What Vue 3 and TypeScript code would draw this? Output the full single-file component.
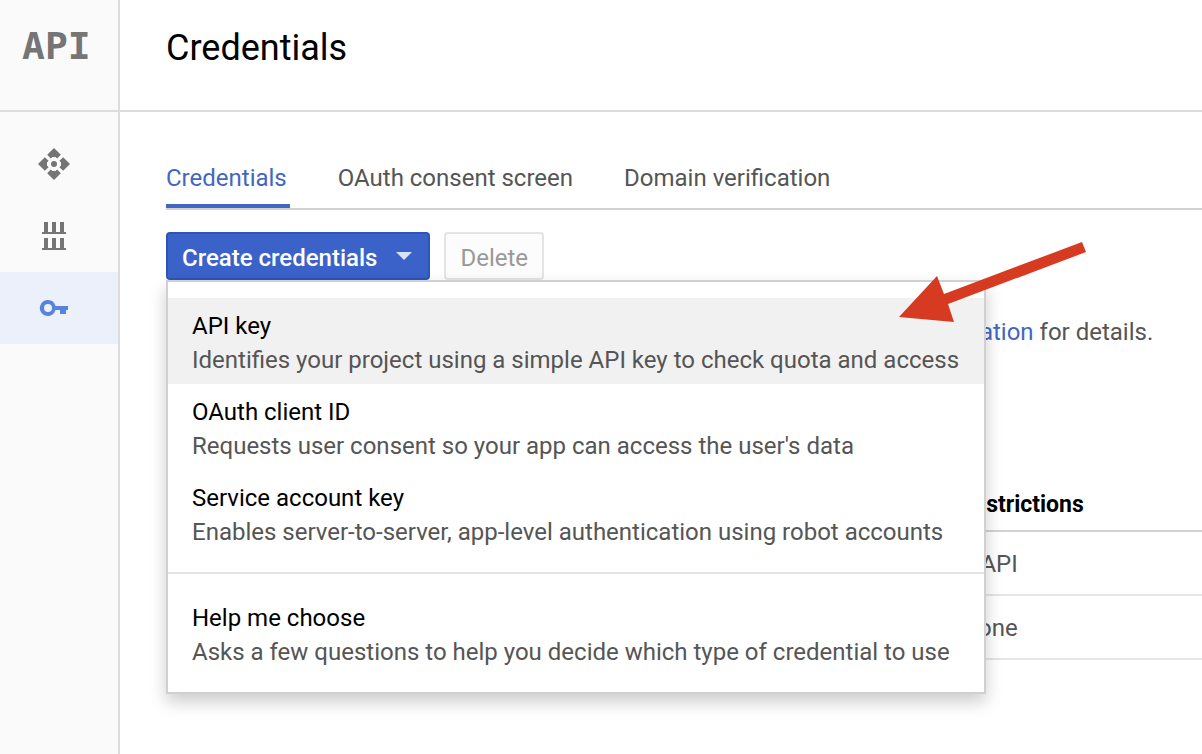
<script setup lang="ts">
interface Choice {
  title: string
  text: string
}

const tabs: string[] = ['Credentials', 'OAuth consent screen', 'Domain verification']

const choices: Choice[] = [
  { title: 'API key', text: 'Identifies your project using a simple API key to check quota and access' },
  { title: 'OAuth client ID', text: "Requests user consent so your app can access the user's data" },
  { title: 'Service account key', text: 'Enables server-to-server, app-level authentication using robot accounts' },
]

const help: Choice = {
  title: 'Help me choose',
  text: 'Asks a few questions to help you decide which type of credential to use',
}

const restrictions: string[] = ['1 API', 'None']
</script>

<template>
  <div class="shell">
    <aside class="sidebar">
      <div class="brand">API</div>
      <nav class="side-nav">
        <a href="#" class="side-link" aria-label="Dashboard">
          <svg width="32" height="32" viewBox="0 0 32 32" fill="currentColor">
            <path d="M16 0l6.800 6.800-3.600 3.800-1.600-1.600h-3.200l-1.600 1.600-3.600-3.800z" />
            <path d="M32 16l-6.800 6.800-3.800-3.600 1.600-1.600v-3.200l-1.600-1.600 3.800-3.600z" />
            <path d="M16 32l-6.800-6.800 3.600-3.800 1.600 1.600h3.200l1.600-1.600 3.600 3.800z" />
            <path d="M0 16l6.800-6.800 3.800 3.600-1.600 1.600v3.200l1.600 1.600-3.800 3.600z" />
            <circle cx="16" cy="16" r="3" />
          </svg>
        </a>
        <a href="#" class="side-link" aria-label="Library">
          <svg width="32" height="32" viewBox="0 0 32 32" fill="currentColor">
            <path d="M6 2h4v10h4V2h4v10h4V2h4v10h2v2H4v-2h2z" />
            <path d="M6 18h4v10h4V18h4v10h4V18h4v10h2v2H4v-2h2z" />
          </svg>
        </a>
        <a href="#" class="side-link active" aria-label="Credentials">
          <svg width="32" height="32" viewBox="0 0 32 32" fill="currentColor">
            <path
              fill-rule="evenodd"
              d="M10 8a8 8 0 0 1 7.500 6H30v4h-2v4h-6v-4h-4.500A8 8 0 1 1 10 8zm0 4a4 4 0 1 0 0 8 4 4 0 0 0 0-8z"
            />
          </svg>
        </a>
      </nav>
    </aside>

    <main class="main">
      <header class="header">
        <h1>Credentials</h1>
      </header>

      <div class="content">
        <nav class="tabs">
          <a v-for="(tab, i) in tabs" :key="tab" href="#" class="tab" :class="{ current: i === 0 }">{{ tab }}</a>
        </nav>

        <div class="actions">
          <div class="picker">
            <button type="button" class="create" aria-haspopup="menu" aria-expanded="true">
              <span class="label">Create credentials</span>
              <svg width="16" height="8" viewBox="0 0 16 8"><path d="M0 0h16l-8 8z" fill="#d7e3fb" /></svg>
            </button>
            <div class="menu" role="menu">
              <button
                v-for="(choice, i) in choices"
                :key="choice.title"
                type="button"
                role="menuitem"
                class="choice"
                :class="{ hovered: i === 0 }"
              >
                <span class="choice-title">{{ choice.title }}</span>
                <span class="choice-text">{{ choice.text }}</span>
              </button>
              <hr />
              <button type="button" role="menuitem" class="choice">
                <span class="choice-title">{{ help.title }}</span>
                <span class="choice-text">{{ help.text }}</span>
              </button>
              <svg class="pointer" width="188" height="84" viewBox="0 0 188 84">
                <path d="M0 77L38 36l7 18L183 2l4 10L49 64l6 18z" fill="#d63a20" />
              </svg>
            </div>
          </div>
          <button type="button" class="delete" disabled><span class="label">Delete</span></button>
        </div>

        <p class="intro"><a href="#">documentation</a> for details.</p>

        <table class="keys">
          <thead>
            <tr>
              <td class="lead"></td>
              <th scope="col">Restrictions</th>
            </tr>
          </thead>
          <tbody>
            <tr v-for="item in restrictions" :key="item">
              <td class="lead"></td>
              <td>{{ item }}</td>
            </tr>
          </tbody>
        </table>
      </div>
    </main>
  </div>
</template>

<style>
body {
  margin: 0;
  background: #fff;
}
</style>

<style scoped>
.shell {
  display: flex;
  min-height: 100vh;
  overflow: hidden;
  font-family: Roboto, "Liberation Sans", sans-serif;
  font-size: 24px;
  line-height: 34px;
  color: #555;
}

.shell *,
.shell {
  box-sizing: border-box;
}

a {
  color: #4267c1;
  text-decoration: none;
}

button {
  font: inherit;
  margin: 0;
}

svg {
  display: block;
}

.sidebar {
  flex: none;
  width: 120px;
  background: #fafafa;
  border-right: 2px solid #dcdcdc;
}

.brand {
  height: 112px;
  padding: 23px 0 0 22px;
  border-bottom: 2px solid #dcdcdc;
  font-family: "DejaVu Sans Mono", monospace;
  font-size: 38px;
  font-weight: 700;
  line-height: 46px;
  color: #757575;
}

.side-nav {
  padding-top: 16px;
}

.side-link {
  display: flex;
  align-items: center;
  height: 72px;
  padding-left: 38px;
  color: #757575;
}

.side-link.active {
  background: #ebf0fa;
  color: #5683df;
}

.main {
  flex: 1;
  min-width: 0;
}

.header {
  height: 112px;
  padding: 24px 46px;
  border-bottom: 2px solid #dcdcdc;
}

h1 {
  margin: 0;
  font-size: 36px;
  font-weight: 400;
  line-height: 48px;
  color: #000;
}

.content {
  padding: 48px 0 0 46px;
}

.tabs {
  display: flex;
  gap: 48px;
  height: 50px;
  border-bottom: 2px solid #d2d2d2;
}

.tab {
  height: 48px;
  padding: 1px 3px 0 0;
  color: #555;
}

.tab.current {
  color: #4267c1;
  border-bottom: 4px solid #4267c1;
}

.actions {
  display: flex;
  gap: 14px;
  padding-top: 22px;
}

.picker {
  position: relative;
}

.create,
.delete {
  display: flex;
  align-items: center;
  height: 48px;
  padding: 0 14px;
  border: 2px solid #2a56b8;
  border-radius: 4px;
}

.create {
  gap: 19px;
  padding-right: 16px;
  background: #3a62c8;
  color: #fff;
  font-weight: 500;
}

.delete {
  background: #fcfcfc;
  border-color: #e4e4e4;
  color: #999;
}

.label {
  padding-top: 3px;
}

.menu {
  position: absolute;
  z-index: 1;
  top: 100%;
  left: 0;
  padding: 16px 0;
  background: #fff;
  border: 2px solid #d0d0d0;
  box-shadow: 0 8px 16px rgba(0, 0, 0, 0.2);
}

.choice {
  display: block;
  width: 100%;
  padding: 11px 25px 7px 24px;
  border: 0;
  background: none;
  text-align: left;
  white-space: nowrap;
}

.choice.hovered {
  background: #f1f1f1;
}

.choice-title,
.choice-text {
  display: block;
}

.choice-title {
  color: #000;
}

.choice-text {
  color: #555;
}

hr {
  height: 2px;
  margin: 16px 0;
  border: 0;
  background: #e3e3e3;
}

.pointer {
  position: absolute;
  top: -42px;
  right: -103px;
}

.intro {
  margin: 35px 0 0;
  padding-left: 706px;
  white-space: nowrap;
}

.keys {
  width: 100%;
  margin-top: 129px;
  border-collapse: collapse;
}

.keys td,
.keys th {
  height: 64px;
  padding: 2px 0 0 2px;
  border-bottom: 2px solid #e6e6e6;
  text-align: left;
}

.keys thead td,
.keys thead th {
  height: 53px;
  padding-left: 0;
  border-bottom-color: #d2d2d2;
  font-size: 23px;
  font-weight: 700;
  color: #000;
}

.keys .lead {
  width: 793px;
}
</style>
